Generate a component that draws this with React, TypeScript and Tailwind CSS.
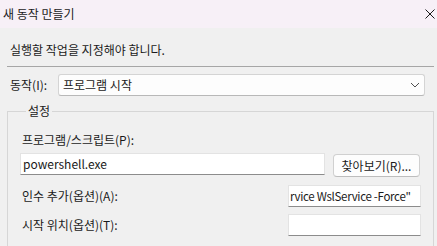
export default function App() {
  return (
    <div className="relative h-[246px] w-[437px] overflow-hidden bg-[#f0f0f0] font-['Noto_Sans_CJK_KR','Noto_Sans',sans-serif] text-[12px] text-[#1a1a1a]">
      {/* Title bar */}
      <div className="flex h-[28px] items-center justify-between bg-[#f7f0f7] pl-[3px] pr-[2px]">
        <span className="leading-[16px]">새 동작 만들기</span>
        <svg width="10" height="10" viewBox="0 0 10 10" className="mt-[-1px]">
          <path d="M0.5 0.5 L9.5 9.5 M9.5 0.5 L0.5 9.5" stroke="#1a1a1a" strokeWidth="1" />
        </svg>
      </div>

      <p className="ml-[10px] mt-[14px] h-[16px] leading-[16px]">실행할 작업을 지정해야 합니다.</p>
      <div className="ml-[7px] mt-[8px] h-px w-[427px] bg-[#a6a6a6]" />

      {/* Action row */}
      <div className="mt-[7px] flex h-[22px] items-center">
        <label className="ml-[10px] w-[48px] leading-[16px]">동작(I):</label>
        <div className="flex h-[22px] w-[367px] items-center justify-between rounded-[3px] border border-[#d4d4d4] border-b-[#b8b8b8] bg-[#fdfdfd] pl-[4px] pr-[4px]">
          <span className="leading-[16px]">프로그램 시작</span>
          <svg width="10" height="6" viewBox="0 0 10 6">
            <path d="M1 1 L5 5 L9 1" stroke="#505050" strokeWidth="1" fill="none" />
          </svg>
        </div>
      </div>

      {/* Settings group */}
      <fieldset className="ml-[7px] mt-[7px] h-[150px] w-[427px] border border-[#d6d6d6] pl-[12px] pr-[12px]">
        <legend className="ml-[6px] px-[2px] leading-[16px]">설정</legend>
        <div className="ml-[2px] mt-[13px] h-[16px] leading-[16px]">프로그램/스크립트(P):</div>
        <div className="mt-[5px] flex items-start">
          <div className="flex h-[22px] w-[305px] items-center border border-[#e3e3e3] border-b-[#8c8c8c] bg-white pl-[2px]">
            <span className="leading-[16px]">powershell.exe</span>
          </div>
          <button className="ml-[8px] mt-[1px] h-[23px] w-[87px] rounded-[4px] border border-[#d0d0d0] border-b-[#bdbdbd] bg-[#fdfdfd] leading-[16px]">
            찾아보기(R)...
          </button>
        </div>
        <div className="mt-[8px] flex items-center justify-between">
          <label className="ml-[2px] leading-[16px]">인수 추가(옵션)(A):</label>
          <div className="flex h-[22px] w-[133px] items-center whitespace-nowrap border border-[#e3e3e3] border-b-[#8c8c8c] bg-white pl-[1px]">
            <span className="text-[11.5px] leading-[16px] tracking-[-0.3px]">rvice WslService -Force"</span>
          </div>
        </div>
        <div className="mt-[7px] flex items-center justify-between">
          <label className="ml-[2px] leading-[16px]">시작 위치(옵션)(T):</label>
          <div className="h-[22px] w-[133px] border border-[#e3e3e3] border-b-[#8c8c8c] bg-white" />
        </div>
      </fieldset>
    </div>
  )
}
